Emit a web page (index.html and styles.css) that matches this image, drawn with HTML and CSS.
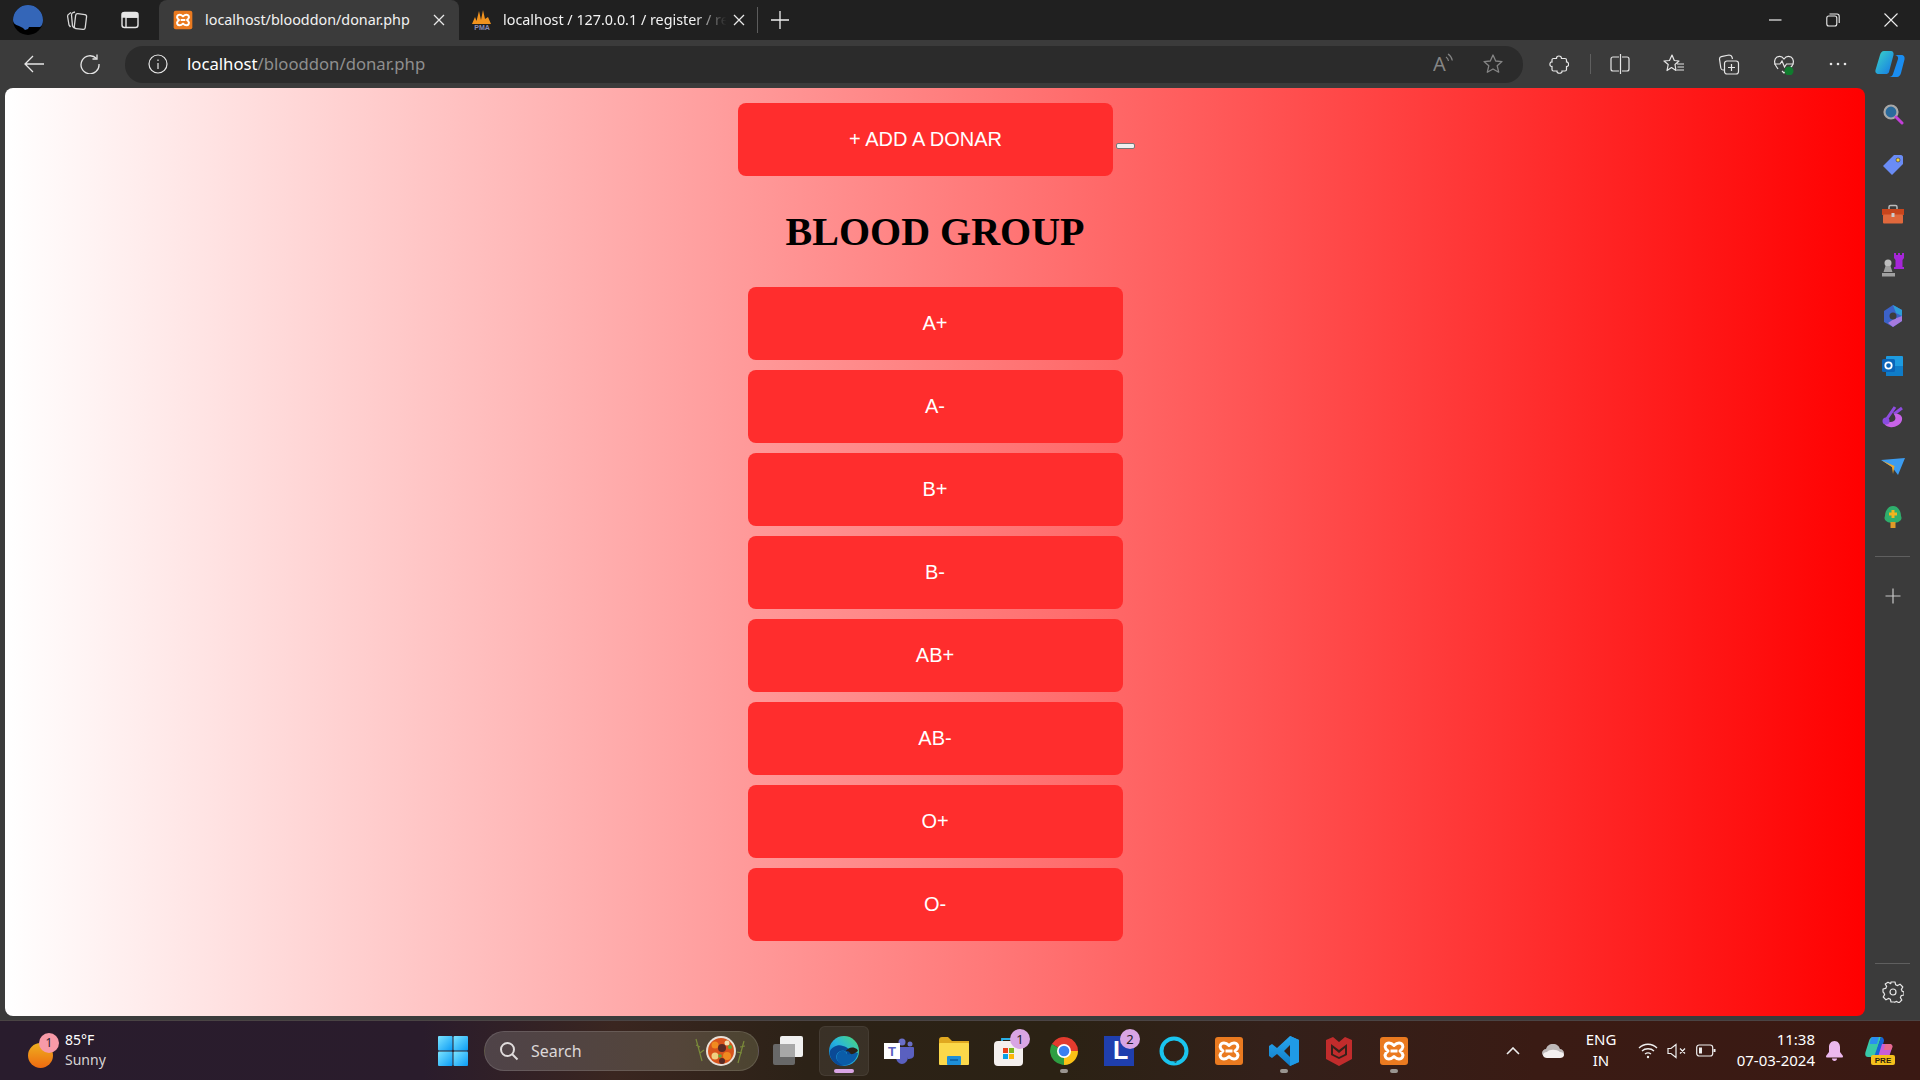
FILE: index.html
```html
<!DOCTYPE html>
<html>
<head>
    <title>Add a donar</title>
    <link rel="stylesheet" href="styles.css">
</head>
<body>
    <svg class="sprite" width="0" height="0">
        <defs>
            <linearGradient id="g-edge" x1="0" y1="1" x2="1" y2="0"><stop offset="0" stop-color="#0c6cc4"/><stop offset=".5" stop-color="#26b4e0"/><stop offset="1" stop-color="#4fdc70"/></linearGradient>
            <linearGradient id="g-win" x1="0" y1="0" x2="1" y2="1"><stop offset="0" stop-color="#7ce4ff"/><stop offset="1" stop-color="#0a9bf5"/></linearGradient>
            <linearGradient id="g-copilot" x1="0" y1="0" x2="1" y2="1"><stop offset="0" stop-color="#3bd6c6"/><stop offset="1" stop-color="#1477e8"/></linearGradient>
            <linearGradient id="g-code" x1="0" y1="0" x2="0" y2="1"><stop offset="0" stop-color="#2aa6ee"/><stop offset="1" stop-color="#0f7cc8"/></linearGradient>
            <symbol id="i-xampp" viewBox="0 0 30 30">
                <rect x="1" y="1" width="28" height="28" rx="3" fill="#ea7a20"/>
                <path d="M10 7c-3.500 0-5 3.500-3 6l2 2-2 2c-2 2.500-.5 6 3 6 2 0 3.500-1 5-2.500 1.500 1.500 3 2.500 5 2.500 3.500 0 5-3.500 3-6l-2-2 2-2c2-2.500.5-6-3-6-2 0-3.500 1-5 2.500C13.500 8 12 7 10 7zM11.500 15h7" fill="none" stroke="#fff" stroke-width="3" stroke-linejoin="round"/>
            </symbol>
        </defs>
    </svg>

    <div class="window">
        <header class="titlebar">
            <div class="profile">
                <svg width="30" height="30" viewBox="0 0 30 30"><circle cx="15" cy="15" r="15" fill="#000"/><path d="M0 15a15 15 0 0 1 30 0c0 3-1 6-3 7H16l-1 2-3 1-2-2-2-1-2-1C2 20 0 18 0 15z" fill="#3466b8"/></svg>
            </div>
            <div class="title-btn">
                <svg width="22" height="22" viewBox="0 0 22 22" fill="none" stroke="#d8d8d8" stroke-width="1.300"><rect x="9" y="5" width="11" height="15" rx="2" transform="rotate(7 14 12)"/><path d="M9 3 7 3.500C6 4 5.500 5 5.500 6l1 11 1.500 2"/><path d="M5 3.500 3 5C2 5.500 1.500 6.500 1.600 7.500L3 16l1.500 2"/></svg>
            </div>
            <div class="title-btn tab-actions">
                <svg width="20" height="20" viewBox="0 0 20 20" fill="none" stroke="#e6e6e6" stroke-width="1.400"><rect x="2" y="2.500" width="16" height="15" rx="2.500"/><path d="M6 7h12M6 7v10"/><path d="M2.500 3.500h15V7h-15z" fill="#e6e6e6"/></svg>
            </div>
            <div class="tab tab-active">
                <svg class="tab-icon" width="20" height="20"><use href="#i-xampp"/></svg>
                <span class="tab-title">localhost/blooddon/donar.php</span>
                <svg class="tab-close" width="12" height="12" viewBox="0 0 12 12" stroke="#e8e8e8" stroke-width="1.300"><path d="M1 1l10 10M11 1L1 11"/></svg>
            </div>
            <div class="tab">
                <svg class="tab-icon tab-icon-pma" width="22" height="22" viewBox="0 0 22 22"><path d="M1 15 4 8l1.500 4L8 2l2 9 2-10 2 9 3-2 3 7z" fill="#f0921e"/><text class="pma-text" x="11" y="20.500" text-anchor="middle">PMA</text></svg>
                <span class="tab-title tab-title-fade">localhost / 127.0.0.1 / register / re</span>
                <svg class="tab-close tab-close-near" width="12" height="12" viewBox="0 0 12 12" stroke="#e8e8e8" stroke-width="1.300"><path d="M1 1l10 10M11 1L1 11"/></svg>
            </div>
            <span class="tab-divider"></span>
            <div class="new-tab">
                <svg width="18" height="18" viewBox="0 0 18 18" stroke="#eee" stroke-width="1.300"><path d="M9 0v18M0 9h18"/></svg>
            </div>
            <div class="win-controls">
                <svg width="14" height="14" viewBox="0 0 14 14" stroke="#eee" stroke-width="1.200"><path d="M1 7h12.500"/></svg>
                <svg width="14" height="14" viewBox="0 0 14 14" fill="none" stroke="#eee" stroke-width="1.100"><rect x=".8" y="3" width="10" height="10" rx="2"/><path d="M3.500 1H11c1.300 0 2.200 1 2.200 2.200V10"/></svg>
                <svg width="14" height="14" viewBox="0 0 14 14" stroke="#eee" stroke-width="1.100"><path d="M.5.500l13 13M13.500.500l-13 13"/></svg>
            </div>
        </header>

        <nav class="toolbar">
            <div class="nav-btn">
                <svg width="20" height="20" viewBox="0 0 20 20" fill="none" stroke="#e6e6e6" stroke-width="1.300"><path d="M20 10H1M9 2l-8 8 8 8"/></svg>
            </div>
            <div class="nav-btn">
                <svg width="20" height="20" viewBox="0 0 20 20" fill="none" stroke="#e6e6e6" stroke-width="1.300"><path d="M16.500 4.500A9 9 0 1 0 19 10"/><path d="M17 .5v4.500h-4.500"/></svg>
            </div>
            <div class="addressbar">
                <svg class="addr-info" width="20" height="20" viewBox="0 0 20 20" fill="none" stroke="#e6e6e6" stroke-width="1.200"><circle cx="10" cy="10" r="9"/><path d="M10 9v6M10 5.500v1.500"/></svg>
                <span class="url"><span class="url-host">localhost</span>/blooddon/donar.php</span>
                <div class="addr-actions">
                    <svg width="22" height="30" viewBox="0 0 22 30" fill="none" stroke="#858585" stroke-width="1.200"><text class="read-aloud" x="0" y="22">A</text><path d="M13 8c1.500 1 2.300 2.500 2.500 4M15 5c2.300 1.500 3.800 3.500 4.300 6.500"/></svg>
                    <svg width="22" height="22" viewBox="0 0 22 22" fill="none" stroke="#858585" stroke-width="1.300"><path d="M11 2l2.700 6 6.300.6-4.800 4.200 1.500 6.400L11 16l-5.700 3.200 1.500-6.400L2 8.600 8.300 8z" stroke-linejoin="round"/></svg>
                </div>
            </div>
            <div class="tool-group">
                <svg width="20" height="20" viewBox="0 0 20 20" fill="none" stroke="#e6e6e6" stroke-width="1.200"><path d="M7.500 4.500C7 1.500 12.500.8 12.500 4.500H16A1.500 1.500 0 0 1 17.500 6V8C20 7.500 20.500 13 17.500 12.500V15.500A1.500 1.500 0 0 1 16 17H13C13.500 20 7.500 20 8 17H4.500A1.500 1.500 0 0 1 3 15.500V12.500C.2 13 .2 7.500 3 8V6A1.500 1.500 0 0 1 4.500 4.500z"/></svg>
            </div>
            <span class="tool-divider"></span>
            <div class="tool-group tool-split">
                <svg width="20" height="20" viewBox="0 0 20 20" fill="none" stroke="#e6e6e6" stroke-width="1.200"><path d="M9 3H3C1.800 3 1 3.800 1 5v10c0 1.200.8 2 2 2h6M12 3h5c1.200 0 2 .8 2 2v10c0 1.200-.8 2-2 2h-5M10.500 0v20"/></svg>
            </div>
            <div class="tool-group">
                <svg width="22" height="22" viewBox="0 0 22 22" fill="none" stroke="#e6e6e6" stroke-width="1.200"><path d="M9 2l2.300 5.500L16 8l-4 3.500 1 6-4.500-3L4 17.500l1.200-6L1 8l5.500-.5zM14 11h7M14.500 14h6.500M14 17h7" stroke-linejoin="round"/></svg>
            </div>
            <div class="tool-group">
                <svg width="22" height="22" viewBox="0 0 22 22" fill="none" stroke="#e6e6e6" stroke-width="1.200"><path d="M6 17H5c-1 0-2-1-2.200-2L1.500 6c0-1 .5-2 1.800-2.300L11 2c1.500 0 2.500.5 3 2l.5 2"/><rect x="6.500" y="8" width="14" height="13" rx="2.500"/><path d="M13.500 11v7M10 14.500h7"/></svg>
            </div>
            <div class="tool-group">
                <svg width="22" height="22" viewBox="0 0 22 22" fill="none" stroke="#e6e6e6" stroke-width="1.200"><path d="M5 16 3 13C1 10 1 6 4 4c2-1 5-1 7 2 2-3 5-3 7-2 3 2 3 6 1 9l-3 3-5 4-2-2"/><path d="M1 11h6l2-3 2.500 6 2-3h7"/><circle cx="16" cy="18" r="4.500" fill="#107c2e" stroke="none"/></svg>
            </div>
            <div class="tool-group tool-more">
                <svg width="20" height="20" viewBox="0 0 20 20" fill="#e6e6e6"><circle cx="3" cy="10" r="1.300"/><circle cx="10" cy="10" r="1.300"/><circle cx="17" cy="10" r="1.300"/></svg>
            </div>
            <div class="tool-copilot">
                <svg width="30" height="28" viewBox="0 0 30 28"><path d="M9 1h7c2 0 3 2 2.500 4L14 22c-.5 1.500-2 2-3 2H4c-3 0-4-2-3.500-4L5 5c.5-2 2-4 4-4z" fill="url(#g-copilot)"/><path d="M19 5h7c3 0 4 2 3.500 4.500L26 23c-.5 2-2 4-4 4h-8c2 0 3.500-1 4-3l5-15c.5-2-1-4-4-4z" fill="#1a8df0"/></svg>
            </div>
        </nav>

        <div class="content">
            <main class="page">
                <div class="add-row">
                    <button class="blood-btn">+ ADD A DONAR</button>
                    <button class="mini-btn"></button>
                </div>
                <h1 class="page-title">BLOOD GROUP</h1>
                <div class="group-list">
                    <button class="blood-btn">A+</button>
                    <button class="blood-btn">A-</button>
                    <button class="blood-btn">B+</button>
                    <button class="blood-btn">B-</button>
                    <button class="blood-btn">AB+</button>
                    <button class="blood-btn">AB-</button>
                    <button class="blood-btn">O+</button>
                    <button class="blood-btn">O-</button>
                </div>
            </main>
            <aside class="sidebar">
                <div class="side-apps">
                    <svg width="22" height="22" viewBox="0 0 22 22"><circle cx="9" cy="9" r="6.500" fill="#2a6a9c" stroke="#a8a8a8" stroke-width="2.200"/><path d="M14 14l6 6" stroke="#c23fd8" stroke-width="3" stroke-linecap="round"/></svg>
                    <svg width="22" height="22" viewBox="0 0 22 22"><path d="M12 1h7c1 0 2 1 2 2v7L10 21 1 12z" fill="#6a8cf5"/><circle cx="16" cy="6" r="2" fill="#f2d13c" stroke="#333" stroke-width=".6"/></svg>
                    <svg width="24" height="22" viewBox="0 0 24 22"><path d="M8 6V3c0-1 1-1.500 1.500-1.500h5c.5 0 1.500.5 1.500 1.500v3" fill="none" stroke="#bbb" stroke-width="1.500"/><rect x="1" y="5" width="22" height="6" fill="#c8451c"/><rect x="2" y="10.500" width="20" height="9" rx="1" fill="#e0683c"/><rect x="10.500" y="9" width="3" height="4" fill="#ccc"/></svg>
                    <svg width="24" height="24" viewBox="0 0 24 24"><path d="M13 0h2v2h2V0h2v2h2V0h2v5l-1.500 2v7H23v2H13v-2h1.500V7L13 5z" fill="#a626d8"/><circle cx="7" cy="10" r="3.500" fill="#bdbdbd"/><path d="M4.500 13h5l2 6h-9zM1 20h13v3.500H1z" fill="#a0a0a0"/></svg>
                    <svg width="22" height="24" viewBox="0 0 22 24"><path d="M11 1l9 5v11l-9 6-9-5V7z" fill="#3c62c8"/><path d="M11 1l9 5v6l-6-3z" fill="#2d9ed8"/><path d="M11 23l9-6v-5l-8 3-6 4z" fill="#a67ae0"/><circle cx="11" cy="12" r="3.500" fill="#3d3d3d"/></svg>
                    <svg width="22" height="22" viewBox="0 0 22 22"><rect x="4" y="1" width="17" height="20" rx="1" fill="#1d9be0"/><path d="M4 11h17v10H4z" fill="#0f7cc8"/><rect x="0" y="4" width="13" height="13" rx="1.500" fill="#0a64b8"/><circle cx="6.500" cy="10.500" r="3.200" fill="none" stroke="#fff" stroke-width="1.800"/></svg>
                    <svg width="22" height="24" viewBox="0 0 22 24"><path d="M13 2 4 15M20 3l-8 6" stroke="#8f4ce0" stroke-width="3" fill="none"/><path d="M12 9c5-1 9 2 8 6-1 5-8 8-12 7-3-.5-6-2-6-5 3 0 9 1 11-2 1-2 0-4-1-6z" fill="#c863e8"/><circle cx="4" cy="16" r="3.500" fill="#8a4ce0"/></svg>
                    <svg width="24" height="20" viewBox="0 0 24 20"><path d="M0 3 24 1 17 18l-6-8z" fill="#3c9cf0"/><path d="M1 3.500l10 6.500 1 7 1.500-8z" fill="#f2a82a"/></svg>
                    <svg width="20" height="24" viewBox="0 0 20 24"><path d="M10 1c5 0 8 5 8 10 2 4-2 7-8 7s-10-3-8-7c0-5 3-10 8-10z" fill="#2fae6c"/><rect x="7.500" y="17" width="5" height="6" fill="#e09a28"/><path d="M8.500 5h3v2.500H14v3h-2.500V13h-3v-2.500H6v-3h2.500z" fill="#f0b41e"/></svg>
                </div>
                <span class="side-divider"></span>
                <svg class="side-plus" width="16" height="16" viewBox="0 0 16 16" stroke="#c8c8c8" stroke-width="1.200"><path d="M8 .5v15M.5 8h15"/></svg>
                <span class="side-divider side-divider-end"></span>
                <svg class="side-gear" width="22" height="22" viewBox="0 0 22 22" fill="none" stroke="#e6e6e6" stroke-width="1.200"><circle cx="11" cy="11" r="3"/><path d="M9 1h4l.6 2.700 2 .9L18 3.200 20.800 6l-1.400 2.400.9 2 1.700.6v3l-2.700.6-.9 2 1.400 2.400-2.800 2.800-2.400-1.400-2 .9L13 21H9l-.6-2.700-2-.9L4 18.800 1.200 16l1.400-2.400-.9-2L1 11V8l2.700-.6.9-2L3.200 3 6 1.200l2.400 1.400 .4-.2z" stroke-linejoin="round"/></svg>
            </aside>
        </div>

        <footer class="taskbar">
            <div class="weather">
                <div class="weather-icon">
                    <span class="weather-sun"></span>
                    <span class="weather-badge">1</span>
                </div>
                <div class="weather-text">
                    <span class="weather-temp">85°F</span>
                    <span class="weather-desc">Sunny</span>
                </div>
            </div>
            <div class="task-item">
                <svg width="30" height="30" viewBox="0 0 30 30" fill="url(#g-win)"><rect x="0" y="0" width="14.500" height="14.500" rx="1"/><rect x="15.500" y="0" width="14.500" height="14.500" rx="1"/><rect x="0" y="15.500" width="14.500" height="14.500" rx="1"/><rect x="15.500" y="15.500" width="14.500" height="14.500" rx="1"/></svg>
            </div>
            <div class="searchbox">
                <svg width="20" height="20" viewBox="0 0 20 20" fill="none" stroke="#e0dcdc" stroke-width="2"><circle cx="8.500" cy="8.500" r="6.500"/><path d="M13 13l5.500 5.500"/></svg>
                <span class="search-label">Search</span>
                <svg class="search-food" width="56" height="32" viewBox="0 0 56 32">
                    <path d="M2 4l6 22M2 10l4 2M6 18l4-3M50 6l-6 22M51 11l-5 1M48 18l-5-1" stroke="#7a8a3a" stroke-width="1.200" fill="none"/>
                    <circle cx="27" cy="16" r="15" fill="#e8e0d8"/>
                    <circle cx="27" cy="16" r="13" fill="#d8541c"/>
                    <circle cx="21" cy="10" r="3.500" fill="#f08a20"/><circle cx="33" cy="21" r="4" fill="#f08a20"/><circle cx="21" cy="21" r="3.500" fill="#f0d080"/><circle cx="28" cy="13" r="4" fill="#5a2a24"/><circle cx="28" cy="26" r="3" fill="#5a2a24"/><circle cx="36" cy="12" r="2" fill="#5ca83a"/><circle cx="26" cy="21" r="1.800" fill="#5ca83a"/><circle cx="33" cy="8" r="2.500" fill="#f0e0b0"/>
                </svg>
            </div>
            <div class="task-item">
                <svg width="32" height="30" viewBox="0 0 32 30"><rect x="0" y="8" width="22" height="21" rx="2" fill="#686868"/><rect x="7" y="0" width="23" height="21" rx="2" fill="#f0f0f0"/><rect x="7" y="8" width="15" height="13" fill="#a8a8a8"/></svg>
            </div>
            <div class="task-item task-active">
                <svg width="30" height="30" viewBox="0 0 30 30"><circle cx="15" cy="15" r="15" fill="url(#g-edge)"/><path d="M9 29C3 26 0 20 1 15c2-4 8-7 13-5 5 1 8 5 8 7 0 2-3 3-4 2 1-3-3-5-6-4-4 1-6 5-4 9 2 3 4 4 8 5-3 1-5 1-7 0z" fill="#0a4a96"/><path d="M18 18c2 1 4 0 5-1 2-1 4-1 6 0-1 6-6 11-12 12-4 1-8-2-9-6-1-4 1-7 4-8 2-1 5 0 6 3z" fill="#0a5ca8"/><path d="M16 16c1-2 4-1 5 1s3 1 5 0l3-2-1-2c-3-2-8-3-12 3z" fill="#2b2117"/></svg>
            </div>
            <div class="task-item">
                <svg width="30" height="26" viewBox="0 0 30 26"><circle cx="18" cy="4" r="3.500" fill="#6a6fc8"/><circle cx="26" cy="6" r="2.500" fill="#6a6fc8"/><path d="M12 9h12v10c0 4-3 7-6 7s-6-3-6-7zM24 9h5c1 0 1 1 1 1v7c0 3-3 4-6 4z" fill="#5a60c0"/><rect x="0" y="5" width="16" height="16" fill="#fff"/><text class="teams-t" x="8" y="18" text-anchor="middle">T</text></svg>
            </div>
            <div class="task-item">
                <svg width="30" height="28" viewBox="0 0 30 28"><path d="M0 3c0-2 1-3 3-3h6l4 4h17v6H0z" fill="#e0a820"/><rect x="0" y="6" width="30" height="22" rx="1" fill="#fbd84a"/><rect x="8" y="19" width="14" height="9" rx="1" fill="#1d8fd8"/><path d="M11 23h8" stroke="#0a5ca0" stroke-width="1.500"/></svg>
            </div>
            <div class="task-item">
                <svg width="30" height="30" viewBox="0 0 30 30"><path d="M8 8V3h14v5" fill="none" stroke="#2ab0e8" stroke-width="1.800"/><rect x="0" y="5" width="29" height="25" rx="4" fill="#f4f0ee"/><rect x="9" y="12" width="5" height="5" fill="#e8401c"/><rect x="15" y="12" width="5" height="5" fill="#7cb820"/><rect x="9" y="18" width="5" height="5" fill="#08a0e8"/><rect x="15" y="18" width="5" height="5" fill="#fcb808"/></svg>
                <span class="task-badge">1</span>
            </div>
            <div class="task-item">
                <svg width="30" height="30" viewBox="0 0 30 30"><path d="M15 15 2.900 8A14 14 0 0 1 29 15z" fill="#e33b2e"/><path d="M15 15 22 27.100A14 14 0 0 1 2.900 8z" fill="#2e9e42"/><path d="M15 15h14A14 14 0 0 1 15 29z" fill="#fbc116"/><circle cx="15" cy="15" r="7" fill="#fff"/><circle cx="15" cy="15" r="5.300" fill="#3a7ff0"/></svg>
                <span class="task-dot"></span>
            </div>
            <div class="task-item">
                <svg width="30" height="30" viewBox="0 0 30 30"><rect width="30" height="30" fill="#1f3fae"/><path d="M11 5v18l3 1V8z" fill="#12235e"/><text class="store-l" x="9" y="23">L</text></svg>
                <span class="task-badge">2</span>
            </div>
            <div class="task-item">
                <svg width="30" height="30" viewBox="0 0 30 30" fill="none"><circle cx="15" cy="15" r="12.500" stroke="#1ac4ee" stroke-width="4"/><path d="M13 25.500l7-1-2.500 3.500z" fill="#1ac4ee"/><path d="M14 25.800l4-.6-1 1.500z" fill="#2f2016"/></svg>
            </div>
            <div class="task-item">
                <svg width="30" height="30"><use href="#i-xampp"/></svg>
            </div>
            <div class="task-item">
                <svg width="30" height="30" viewBox="0 0 30 30"><path d="M21 0l9 4v22l-9 4L8 18l-5 4-3-2v-10l3-2 5 4zM21 9l-6 6 6 6z" fill="url(#g-code)" fill-rule="evenodd"/><path d="M21 0l9 4v22l-9 4z" fill="#1f9ae6"/></svg>
                <span class="task-dot"></span>
            </div>
            <div class="task-item">
                <svg width="26" height="30" viewBox="0 0 26 30"><path d="M0 4l7-3 6 5 6-5 7 3v19l-13 7L0 23z" fill="#c12c2c"/><path d="M5 8l8 6 8-6v11l-8 4-8-4z" fill="#35211a"/><path d="M7 12v6l6 3 6-3v-6l-6 5z" fill="#c12c2c"/></svg>
            </div>
            <div class="task-item">
                <svg width="30" height="30"><use href="#i-xampp"/></svg>
                <span class="task-dot"></span>
            </div>

            <div class="tray">
                <svg class="tray-chevron" width="14" height="8" viewBox="0 0 14 8" fill="none" stroke="#eee" stroke-width="1.600"><path d="M1 7l6-6 6 6"/></svg>
                <svg class="tray-cloud" width="22" height="14" viewBox="0 0 22 14"><path d="M5 13C2 13 0 11 0 9s2-4 4-4c1-3 3-5 7-5s6 2 7 5c2 0 4 2 4 4s-1 4-3 4z" fill="#bdb8b8"/><path d="M5 14c-2 0-4-1-4-3s2-3 4-3c2-3 10-3 13 0 2 0 4 1 4 3s-2 3-4 3z" fill="#f4f0f0"/></svg>
                <div class="tray-lang"><span>ENG</span><span>IN</span></div>
                <div class="tray-icons">
                    <svg width="20" height="16" viewBox="0 0 20 16" fill="none" stroke="#eee" stroke-width="1.300"><path d="M1 5c5-5 13-5 18 0M4 8c3-3 9-3 12 0M7 11c2-1.500 4-1.500 6 0"/><circle cx="10" cy="14" r="1.200" fill="#eee" stroke="none"/></svg>
                    <svg width="20" height="16" viewBox="0 0 20 16" fill="none" stroke="#eee" stroke-width="1.200"><path d="M1 5.500v5h3l5 4V1.500l-5 4zM13 5.500l5 5M18 5.500l-5 5"/></svg>
                    <svg width="20" height="14" viewBox="0 0 20 14" fill="none" stroke="#eee" stroke-width="1.200"><rect x=".7" y="1" width="16" height="11" rx="2.500"/><rect x="3" y="3.500" width="3" height="6" fill="#eee" stroke="none"/><path d="M18.500 5v3" stroke-width="2"/></svg>
                </div>
                <div class="tray-clock"><span>11:38</span><span>07-03-2024</span></div>
                <svg class="tray-bell" width="17" height="20" viewBox="0 0 17 20" fill="#ecb8ee"><path d="M8.500 0C5 0 3 3 3 6v5l-3 4c0 1 .5 1.500 1 1.500h15c.5 0 1-.5 1-1.500l-3-4V6c0-3-2-6-5.500-6z"/><path d="M6 17.500h5c0 1.500-1 2.500-2.500 2.500S6 19 6 17.500z"/></svg>
                <svg class="tray-copilot" width="30" height="28" viewBox="0 0 30 28"><path d="M8 0h8l-6 20H3C0 20 0 17 .5 15L4 4c.5-2 2-4 4-4z" fill="#38c8a8"/><path d="M8 0h6l-2 7H5C5 3 6 0 8 0z" fill="#2a8df0"/><path d="M16 0c2 0 3 2 3 4l-5 16H9z" fill="#1465d8"/><path d="M17 7h7c3 0 4 2 3 4l-3 9H13z" fill="#c85ed8"/><path d="M20 7h4c3 0 4 2 3 4l-1 2h-7z" fill="#e86a8c"/><rect x="6" y="18" width="24" height="10" rx="2" fill="#f4c01c"/><text class="pre-text" x="18" y="26" text-anchor="middle">PRE</text></svg>
            </div>
        </footer>
    </div>
</body>
</html>
```

FILE: styles.css
```css
* {
    box-sizing: border-box;
}
body {
    margin: 0;
    padding: 0;
    overflow: hidden;
    height: 100vh;
    font-family: "Noto Sans", sans-serif;
    color: #fff;
    background-color: #3b3b3b;
}
svg {
    display: block;
    flex-shrink: 0;
}
.sprite {
    position: absolute;
}
.window {
    display: flex;
    flex-direction: column;
    height: 1080px;
}

/* title bar */
.titlebar {
    height: 40px;
    background-color: #202020;
    display: flex;
    align-items: center;
    padding-left: 13px;
}
.profile {
    width: 30px;
    height: 30px;
    margin-right: 23px;
}
.title-btn {
    width: 22px;
    margin-right: 32px;
}
.tab-actions {
    width: 20px;
    margin-right: 19px;
}
.tab {
    height: 40px;
    width: 300px;
    display: flex;
    align-items: center;
    padding: 0 14px 0 12px;
    font-size: 14.35px;
}
.tab-active {
    background-color: #3b3b3b;
    border-radius: 8px 8px 0 0;
    padding-left: 14px;
}
.tab-icon {
    margin-right: 12px;
}
.tab-icon-pma {
    margin-right: 10px;
}
.tab-title {
    flex: 1;
    white-space: nowrap;
    color: #f2f2f2;
    padding-bottom: 2px;
}
.tab-title-fade {
    -webkit-mask-image: linear-gradient(to right, #000 84%, transparent 98%);
    mask-image: linear-gradient(to right, #000 84%, transparent 98%);
}
.tab-close {
    margin-left: 10px;
}
.tab-close-near {
    margin-left: 2px;
}
.tab-divider {
    width: 1px;
    height: 26px;
    background-color: #5c5c5c;
    margin-left: -2px;
}
.new-tab {
    margin-left: 13px;
}
.win-controls {
    margin-left: auto;
    display: flex;
    gap: 44px;
    padding-right: 22px;
}
.pma-text {
    font: bold 7px "Liberation Sans", sans-serif;
    fill: #8a8cb8;
}

/* address row */
.toolbar {
    height: 48px;
    background-color: #3b3b3b;
    display: flex;
    align-items: center;
    padding-left: 24px;
}
.nav-btn {
    width: 20px;
    margin-right: 36px;
}
.addressbar {
    width: 1398px;
    height: 37px;
    margin-left: -11px;
    background-color: #2b2b2b;
    border-radius: 18px;
    display: flex;
    align-items: center;
    padding: 0 19px 0 23px;
}
.addr-info {
    margin-right: 19px;
}
.url {
    font-size: 16.7px;
    color: #8f8f8f;
    padding-bottom: 2px;
}
.url-host {
    color: #fff;
}
.addr-actions {
    margin-left: auto;
    display: flex;
    align-items: center;
    gap: 27px;
}
.read-aloud {
    font: 20px "Noto Sans", sans-serif;
    fill: #858585;
    stroke: none;
}
.tool-group {
    width: 22px;
    margin-left: 25px;
    margin-right: 8px;
    display: flex;
    justify-content: center;
}
.tool-divider {
    width: 1px;
    height: 20px;
    margin-left: 12px;
    background-color: #5f5f5f;
}
.tool-split {
    margin-left: 18px;
    margin-right: 7px;
}
.tool-more {
    margin-left: 24px;
}
.tool-copilot {
    margin-left: 18px;
}

/* page area */
.content {
    flex: 1;
    display: flex;
    min-height: 0;
    padding: 0 0 4px 5px;
}
.page {
    width: 1860px;
    background: linear-gradient(to right, #fff, #f00);
    border-radius: 8px;
    padding-top: 15px;
    overflow: hidden;
}
.add-row {
    display: flex;
    justify-content: center;
    align-items: flex-start;
    gap: 3px;
    padding-left: 3px;
}
.blood-btn {
    width: 375px;
    height: 73px;
    background-color: #ff2d2d;
    color: #fff;
    border: none;
    border-radius: 8px;
    font: 20px "Liberation Sans", Arial, sans-serif;
}
.mini-btn {
    width: 19px;
    height: 6px;
    margin-top: 40px;
    padding: 0;
    background-color: #efefef;
    border: 1px solid #767676;
    border-radius: 2px;
}
.page-title {
    margin: 33px 0 32px;
    height: 46px;
    font: bold 40px/46px "Liberation Serif", "Times New Roman", serif;
    color: #000;
    text-align: center;
}
.group-list {
    display: flex;
    flex-direction: column;
    align-items: center;
    gap: 10px;
}

/* edge sidebar */
.sidebar {
    flex: 1;
    display: flex;
    flex-direction: column;
    align-items: center;
    padding-top: 1px;
    margin-bottom: -4px;
}
.side-apps {
    display: grid;
    grid-auto-rows: 50.4px;
    place-items: center;
}
.side-divider {
    width: 35px;
    height: 1px;
    background-color: #5f5f5f;
    margin-top: 13px;
}
.side-plus {
    margin-top: 31px;
}
.side-divider-end {
    margin-top: auto;
}
.side-gear {
    margin: 17px 0;
}

/* windows taskbar */
.taskbar {
    height: 60px;
    display: flex;
    align-items: center;
    background: linear-gradient(to right, #291c2d 0%, #2a1c2c 22%, #3a2620 32%, #2c2217 42%, #2b2214 55%, #33201a 66%, #3a1b14 80%, #3a1913 100%);
    border-top: 1px solid #4a4444;
}
.weather {
    width: 425px;
    display: flex;
    align-items: center;
    padding-left: 28px;
}
.weather-icon {
    position: relative;
    width: 37px;
    height: 36px;
}
.weather-sun {
    position: absolute;
    left: 0;
    top: 10px;
    width: 25px;
    height: 25px;
    border-radius: 50%;
    background: linear-gradient(#eeb020, #ee6a10);
}
.weather-badge {
    position: absolute;
    left: 11px;
    top: 0;
    width: 20px;
    height: 20px;
    border-radius: 50%;
    background-color: #f79aa8;
    color: #2a1c2c;
    font-size: 12px;
    line-height: 20px;
    text-align: center;
}
.weather-text {
    display: flex;
    flex-direction: column;
    font-size: 14px;
    line-height: 20px;
    padding-bottom: 2px;
}
.weather-desc {
    color: #d8d4d4;
}
.task-item {
    position: relative;
    width: 55px;
    height: 50px;
    display: flex;
    align-items: center;
    justify-content: center;
    border-radius: 6px;
    border: 1px solid transparent;
}
.task-active {
    background-color: rgba(255, 255, 255, 0.07);
    border-color: rgba(255, 255, 255, 0.06);
    width: 50px;
    margin: 0 2.5px;
}
.task-active::after {
    content: "";
    position: absolute;
    left: 14px;
    bottom: 2px;
    width: 20px;
    height: 4px;
    border-radius: 2px;
    background-color: #d9a5e4;
}
.task-badge {
    position: absolute;
    right: 5px;
    top: 2px;
    width: 20px;
    height: 20px;
    border-radius: 50%;
    background-color: #d9a5e4;
    color: #231a22;
    font-size: 13px;
    line-height: 20px;
    text-align: center;
}
.task-dot {
    position: absolute;
    left: 23px;
    bottom: 2px;
    width: 8px;
    height: 4px;
    border-radius: 2px;
    background-color: #9a9590;
}
.searchbox {
    width: 275px;
    height: 40px;
    margin-left: 4px;
    margin-right: 2px;
    border-radius: 20px;
    border: 1px solid rgba(255, 255, 255, 0.12);
    background: linear-gradient(to right, #4f4348, #54453a 70%, #4c4430);
    display: flex;
    align-items: center;
    padding-left: 14px;
}
.search-label {
    margin-left: 12px;
    font-size: 16px;
    color: #dcd8d8;
}
.search-food {
    margin-left: auto;
    margin-right: 8px;
}
.teams-t {
    font: bold 13px "Liberation Sans", sans-serif;
    fill: #5a60c0;
}
.store-l {
    font: bold 25px "Liberation Sans", sans-serif;
    fill: #fff;
}
.pre-text {
    font: bold 8px "Liberation Sans", sans-serif;
    fill: #2a1c0c;
}
.tray {
    margin-left: auto;
    display: flex;
    align-items: center;
    font-size: 15px;
    line-height: 21px;
    padding-right: 25px;
}
.tray-cloud {
    margin-left: 22px;
}
.tray-lang {
    width: 48px;
    margin-left: 13px;
    display: flex;
    flex-direction: column;
    align-items: center;
    padding-bottom: 1px;
}
.tray-icons {
    display: flex;
    align-items: center;
    gap: 9px;
    margin-left: 13px;
}
.tray-clock {
    width: 99px;
    display: flex;
    flex-direction: column;
    align-items: flex-end;
    padding-bottom: 1px;
}
.tray-bell {
    margin-left: 11px;
}
.tray-copilot {
    margin-left: 22px;
}
```
